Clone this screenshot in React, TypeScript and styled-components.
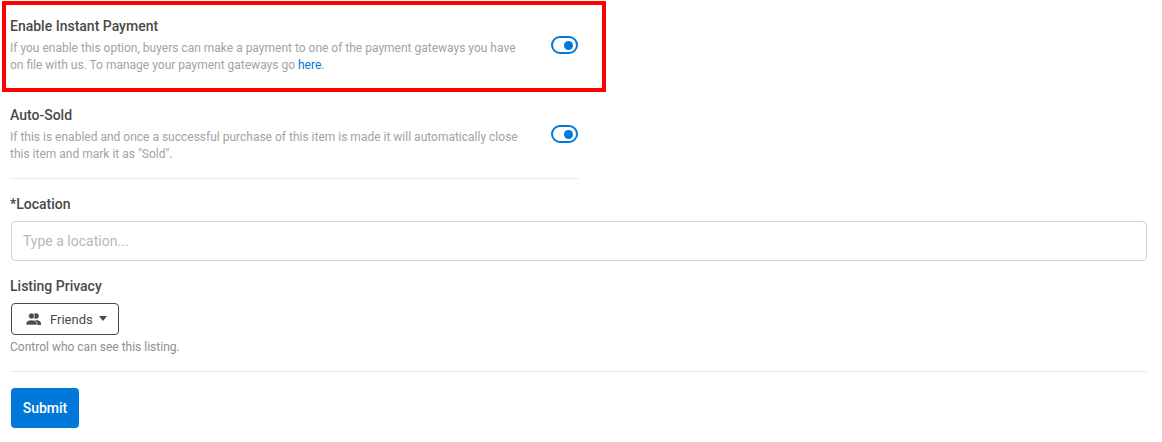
import React from "react";
import styled, { createGlobalStyle } from "styled-components";

const Global = createGlobalStyle`
  html, body { margin: 0; padding: 0; background: #fff; }
  body { font-family: Roboto, "Liberation Sans", sans-serif; color: #4a4a4a; }
  * { box-sizing: border-box; }
`;
const Page = styled.div`
  width: 1162px; height: 442px; padding: 0 15px 0 11px; overflow: hidden; position: relative;
`;
const OptionColumn = styled.div`width: 569px; margin-left: -1px;`;
const Highlight = styled.div`
  position: absolute; left: 2px; top: 1px; width: 604px; height: 91px; border: 4px solid #f00; pointer-events: none;
`;
const Option = styled.div<{ $divider?: boolean; $h: number }>`
  display: flex; justify-content: space-between; align-items: flex-start; height: ${p => p.$h}px; padding-top: 16px;
  ${p => p.$divider ? "border-bottom: 1px solid #e9ecef;" : ""}
`;
const OptionText = styled.div`width: 515px;`;
const Title = styled.div`font-size: 14px; font-weight: 500; line-height: 21px; color: #4a4a4a;`;
const Help = styled.div`font-size: 12px; line-height: 17px; color: #a3a3a3; margin-top: 3px;`;
const Link = styled.a`color: #0078d9; text-decoration: none;`;
const Toggle = styled.span`
  width: 27px; height: 18px; margin: 20px 1px 0 0; border: 2.5px solid #0078d9; border-radius: 9px; display: flex; align-items: center; justify-content: flex-end; padding-right: 3px;
  &::after { content: ""; width: 9px; height: 9px; border-radius: 50%; background: #0078d9; }
`;
const Label = styled.div`font-size: 14px; font-weight: 500; line-height: 21px; color: #4a4a4a; margin-left: -1px;`;
const Input = styled.input`
  display: block; width: 100%; height: 40px; margin-top: 6px; border: 1px solid #ced4da; border-radius: 4px; padding: 0 11px;
  font: 14px Roboto, sans-serif;
  &::placeholder { color: #b4b9be; }
`;
const Dropdown = styled.button`
  display: flex; align-items: center; height: 32px; width: 108px; margin-top: 6px; padding: 0 0 0 14px; background: #fff;
  border: 1px solid #4a4a4a; border-radius: 4px; font: 13px Roboto, sans-serif; color: #4a4a4a;
`;
const Caret = styled.span`
  margin: -2px 0 0 6px; border-left: 4px solid transparent; border-right: 4px solid transparent; border-top: 5px solid #4a4a4a;
`;
const Name = styled.span`margin-left: 9px;`;
const Hint = styled.div`font-size: 12px; line-height: 18px; color: #8f8f8f; margin: 3px 0 0 -1px;`;
const Rule = styled.hr`border: 0; border-top: 1px solid #e9ecef; margin: 15px 0 16px;`;
const Submit = styled.button`
  width: 68px; height: 40px; border: 0; border-radius: 4px; background: #0078d9; color: #fff; font: 500 14px Roboto, sans-serif; padding: 0;
`;
const Section = styled.div<{ $top: number }>`margin-top: ${p => p.$top}px;`;

const Users = () => (
  <svg width="15" height="12" viewBox="0 0 15 12" fill="#4a4a4a">
    <circle cx="10" cy="3" r="2.8" />
    <path d="M8 7.2h3c2.2 0 4 1.4 4 3.2V12H8z" />
    <circle cx="5.5" cy="3" r="3" stroke="#fff" strokeWidth="0.7" />
    <path d="M0 12v-1.5C0 8.5 2.6 7 5.5 7s5.5 1.5 5.5 3.5V12z" stroke="#fff" strokeWidth="0.7" />
  </svg>
);

export default function App() {
  return (
    <Page>
      <Global />
      <Highlight />
      <OptionColumn>
        <Option $h={89}>
          <OptionText>
            <Title>Enable Instant Payment</Title>
            <Help>If you enable this option, buyers can make a payment to one of the payment gateways you have on file with us. To manage your payment gateways go <Link>here</Link>.</Help>
          </OptionText>
          <Toggle />
        </Option>
        <Option $h={90} $divider>
          <OptionText>
            <Title>Auto-Sold</Title>
            <Help>If this is enabled and once a successful purchase of this item is made it will automatically close this item and mark it as "Sold".</Help>
          </OptionText>
          <Toggle />
        </Option>
      </OptionColumn>
      <Section $top={15}>
        <Label>*Location</Label>
        <Input placeholder="Type a location..." />
      </Section>
      <Section $top={15}>
        <Label>Listing Privacy</Label>
        <Dropdown><Users /><Name>Friends</Name><Caret /></Dropdown>
        <Hint>Control who can see this listing.</Hint>
      </Section>
      <Rule />
      <Submit>Submit</Submit>
    </Page>
  );
}
